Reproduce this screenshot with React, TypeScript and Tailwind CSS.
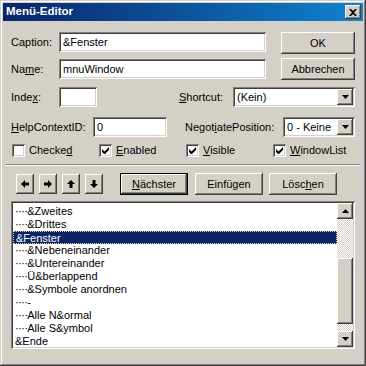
import React from 'react';

// classic 3D bevels
const raised =
  'shadow-[inset_-1px_-1px_#404040,inset_1px_1px_#ffffff,inset_-2px_-2px_#808080,inset_2px_2px_#d4d0c8]';
const sunken =
  'shadow-[inset_1px_1px_#808080,inset_-1px_-1px_#ffffff,inset_2px_2px_#404040,inset_-2px_-2px_#d4d0c8]';

const Ul = ({ t, i }: { t: string; i: number }) => (
  <>
    {t.slice(0, i)}
    <span className="underline underline-offset-[1px]">{t[i]}</span>
    {t.slice(i + 1)}
  </>
);

const Label = ({ className, children }: { className: string; children: React.ReactNode }) => (
  <div className={`h-[20px] leading-[20px] whitespace-nowrap ${className}`}>{children}</div>
);

const Field = ({ className, text }: { className: string; text?: string }) => (
  <div className={`h-[20px] bg-white ${sunken} pl-[4px] flex items-center whitespace-nowrap ${className}`}>
    {text}
  </div>
);

const Combo = ({ className, text }: { className: string; text: string }) => (
  <div className={`h-[20px] bg-white ${sunken} pl-[4px] pr-[2px] flex items-center whitespace-nowrap ${className}`}>
    <span>{text}</span>
    <div className={`ml-auto w-[16px] h-[16px] bg-[#d4d0c8] ${raised} flex items-center justify-center`}>
      <svg width="7" height="4" viewBox="0 0 7 4">
        <path d="M0 0h7L3.5 4z" fill="#000" />
      </svg>
    </div>
  </div>
);

const Btn = ({ className, children }: { className: string; children: React.ReactNode }) => (
  <div className={`h-[22px] bg-[#d4d0c8] ${raised} flex items-center justify-center whitespace-nowrap ${className}`}>
    {children}
  </div>
);

const Check = ({ checked, children }: { checked: boolean; children: React.ReactNode }) => (
  <div className="w-[87px] flex items-center">
    <div className={`w-[13px] h-[13px] bg-white ${sunken} flex items-center justify-center`}>
      {checked && (
        <svg width="7" height="7" viewBox="0 0 7 7">
          <path d="M0 2v3l2 2h1l4-4V0L2.5 4.5z" fill="#000" />
        </svg>
      )}
    </div>
    <span className="ml-[4px] leading-none">{children}</span>
  </div>
);

const arrows = [
  'M0 4 4 0v2.5h4v3H4V8z',
  'M8 4 4 0v2.5H0v3h4V8z',
  'M4 0 0 4h2.5v4h3V4H8z',
  'M4 8 0 4h2.5V0h3v4H8z',
];

// indent = level of "····" prefix
const items = [
  { t: '&Zweites', ind: true },
  { t: '&Drittes', ind: true },
  { t: '&Fenster', sel: true },
  { t: '&Nebeneinander', ind: true },
  { t: '&Untereinander', ind: true },
  { t: 'Ü&berlappend', ind: true },
  { t: '&Symbole anordnen', ind: true },
  { t: '-', ind: true },
  { t: 'Alle N&ormal', ind: true },
  { t: 'Alle S&ymbol', ind: true },
  { t: '&Ende' },
];

export default function App() {
  return (
    <div
      className={`w-[366px] h-[366px] bg-[#d4d0c8] p-[3px] flex flex-col text-[11px] text-black font-['Liberation_Sans',Arial,sans-serif] shadow-[inset_-1px_-1px_#404040,inset_1px_1px_#d4d0c8,inset_-2px_-2px_#808080,inset_2px_2px_#ffffff]`}
    >
      {/* Title bar */}
      <div className="h-[18px] flex items-center bg-linear-to-r from-[#0a246a] to-[#1084d0] pl-[3px] pr-[2px]">
        <span className="text-white font-bold text-[11.5px] leading-none">Menü-Editor</span>
        <div className={`ml-auto w-[16px] h-[14px] bg-[#d4d0c8] ${raised} flex items-center justify-center`}>
          <svg width="8" height="7" viewBox="0 0 8 7">
            <path d="M0 0h2l2 2 2-2h2L5 3.5 8 7H6L4 5 2 7H0l3-3.5z" fill="#000" />
          </svg>
        </div>
      </div>

      {/* Caption */}
      <div className="flex items-start mt-[11px] pl-[8px]">
        <Label className="w-[48px]">Caption:</Label>
        <Field className="w-[207px]" text="&Fenster" />
        <Btn className="ml-[15px] w-[74px]">OK</Btn>
      </div>

      {/* Name */}
      <div className="flex items-start mt-[4px] pl-[8px]">
        <Label className="w-[48px] mt-[1px]">
          <Ul t="Name:" i={2} />
        </Label>
        <Field className="w-[207px] mt-[1px]" text="mnuWindow" />
        <Btn className="ml-[15px] w-[74px]">Abbrechen</Btn>
      </div>

      {/* Index / Shortcut */}
      <div className="flex items-start mt-[7px] pl-[8px]">
        <Label className="w-[48px]">
          <Ul t="Index:" i={4} />
        </Label>
        <Field className="w-[38px]" />
        <Label className="ml-[82px] w-[54px]">
          <Ul t="Shortcut:" i={0} />
        </Label>
        <Combo className="w-[122px]" text="(Kein)" />
      </div>

      {/* HelpContextID / NegotiatePosition */}
      <div className="flex items-start mt-[10px] pl-[8px]">
        <Label className="w-[82px]">
          <Ul t="HelpContextID:" i={0} />
        </Label>
        <Field className="w-[74px]" text="0" />
        <Label className="ml-[18px] w-[98px]">
          <Ul t="NegotiatePosition:" i={5} />
        </Label>
        <Combo className="w-[72px]" text="0 - Keine" />
      </div>

      {/* Checkboxes */}
      <div className="flex items-center mt-[7px] pl-[9px] h-[13px]">
        <Check checked={false}>
          <Ul t="Checked" i={6} />
        </Check>
        <Check checked>
          <Ul t="Enabled" i={0} />
        </Check>
        <Check checked>
          <Ul t="Visible" i={0} />
        </Check>
        <Check checked>
          <Ul t="WindowList" i={0} />
        </Check>
      </div>

      {/* Separator */}
      <div className="mt-[7px] mx-[3px] h-[2px] border-t border-t-[#808080] border-b border-b-white" />

      {/* Buttons row */}
      <div className="flex items-center mt-[7px] pl-[13px]">
        <div className="flex gap-[5px]">
          {arrows.map((d, i) => (
            <div key={i} className={`w-[18px] h-[20px] bg-[#d4d0c8] ${raised} flex items-center justify-center`}>
              <svg width="8" height="8" viewBox="0 0 8 8">
                <path d={d} fill="#000" />
              </svg>
            </div>
          ))}
        </div>
        <div className="ml-[17px] w-[68px] h-[22px] border border-black">
          <div className={`w-full h-full bg-[#d4d0c8] ${raised} flex items-center justify-center`}>
            <Ul t="Nächster" i={0} />
          </div>
        </div>
        <Btn className="ml-[7px] w-[68px]">
          <Ul t="Einfügen" i={5} />
        </Btn>
        <Btn className="ml-[6px] w-[68px]">
          <Ul t="Löschen" i={4} />
        </Btn>
      </div>

      {/* List */}
      <div className={`ml-[8px] mt-[6px] w-[344px] h-[148px] bg-white ${sunken} p-[2px] flex`}>
        <div className="flex-1 pt-[2px]">
          {items.map((it, i) => (
            <div
              key={i}
              className={`h-[13px] leading-[12px] pl-[2px] whitespace-nowrap ${
                it.sel ? 'bg-[#0a246a] text-white border border-dotted border-[#e8d878] pl-[1px]' : ''
              }`}
            >
              {it.ind && <span className="tracking-[-0.6px]">····</span>}
              {it.t}
            </div>
          ))}
        </div>
        <div className="w-[16px] flex flex-col">
          <div className={`h-[16px] bg-[#d4d0c8] ${raised} flex items-center justify-center`}>
            <svg width="7" height="4" viewBox="0 0 7 4">
              <path d="M3.5 0 7 4H0z" fill="#000" />
            </svg>
          </div>
          <div className="h-[39px] bg-[repeating-conic-gradient(#d4d0c8_0_25%,#ffffff_0_50%)] bg-[length:2px_2px]" />
          <div className={`h-[66px] bg-[#d4d0c8] ${raised}`} />
          <div className="flex-1 bg-[repeating-conic-gradient(#d4d0c8_0_25%,#ffffff_0_50%)] bg-[length:2px_2px]" />
          <div className={`h-[16px] bg-[#d4d0c8] ${raised} flex items-center justify-center`}>
            <svg width="7" height="4" viewBox="0 0 7 4">
              <path d="M0 0h7L3.5 4z" fill="#000" />
            </svg>
          </div>
        </div>
      </div>
    </div>
  );
}
